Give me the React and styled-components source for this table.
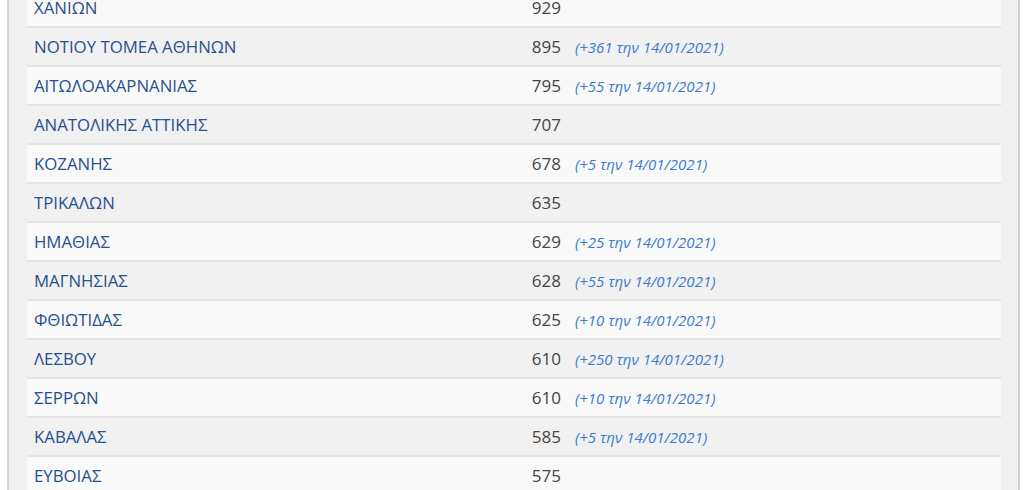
import React from 'react';
import styled, { createGlobalStyle } from 'styled-components';

const GlobalStyle = createGlobalStyle`
  html, body {
    margin: 0;
    padding: 0;
    background: #ffffff;
    overflow: hidden;
  }
  body {
    font-family: "Open Sans", "Noto Sans", sans-serif;
  }
`

const Page = styled.div`
  padding: 0 4px 0 7px;
  margin-top: -11px;
`

const Panel = styled.div`
  background-color: #f0f0f0;
  border-left: 2px solid #d4d4d4;
  border-right: 2px solid #cfcfcf;
  padding: 0 17px 0 18px;
`

const Row = styled.div`
  display: grid;
  grid-template-columns: 504px 30px 1fr;
  align-items: center;
  height: 37px;
  border-bottom: 2px solid #e4e4e4;
  background-color: ${props => (props.$odd ? '#f9f9f9' : '#f1f1f1')};
`

const Name = styled.div`
  padding-left: 7px;
  font-size: 16.8px;
  color: #26508e;
  white-space: nowrap;
`

const Count = styled.div`
  font-size: 17px;
  color: #444444;
  text-align: right;
`

const Change = styled.div`
  padding-left: 14px;
  font-size: 15px;
  font-style: italic;
  color: #3a7bd0;
  white-space: nowrap;
`

const rows = [
  ['ΧΑΝΙΩΝ', 929, null],
  ['ΝΟΤΙΟΥ ΤΟΜΕΑ ΑΘΗΝΩΝ', 895, 361],
  ['ΑΙΤΩΛΟΑΚΑΡΝΑΝΙΑΣ', 795, 55],
  ['ΑΝΑΤΟΛΙΚΗΣ ΑΤΤΙΚΗΣ', 707, null],
  ['ΚΟΖΑΝΗΣ', 678, 5],
  ['ΤΡΙΚΑΛΩΝ', 635, null],
  ['ΗΜΑΘΙΑΣ', 629, 25],
  ['ΜΑΓΝΗΣΙΑΣ', 628, 55],
  ['ΦΘΙΩΤΙΔΑΣ', 625, 10],
  ['ΛΕΣΒΟΥ', 610, 250],
  ['ΣΕΡΡΩΝ', 610, 10],
  ['ΚΑΒΑΛΑΣ', 585, 5],
  ['ΕΥΒΟΙΑΣ', 575, null],
];

export default function App() {
  return (
    <>
      <GlobalStyle />
      <Page>
        <Panel>
          {rows.map(([name, count, diff], i) => (
            <Row key={name} $odd={i % 2 === 0}>
              <Name>{name}</Name>
              <Count>{count}</Count>
              <Change>{diff ? `(+${diff} την 14/01/2021)` : ''}</Change>
            </Row>
          ))}
        </Panel>
      </Page>
    </>
  );
}
